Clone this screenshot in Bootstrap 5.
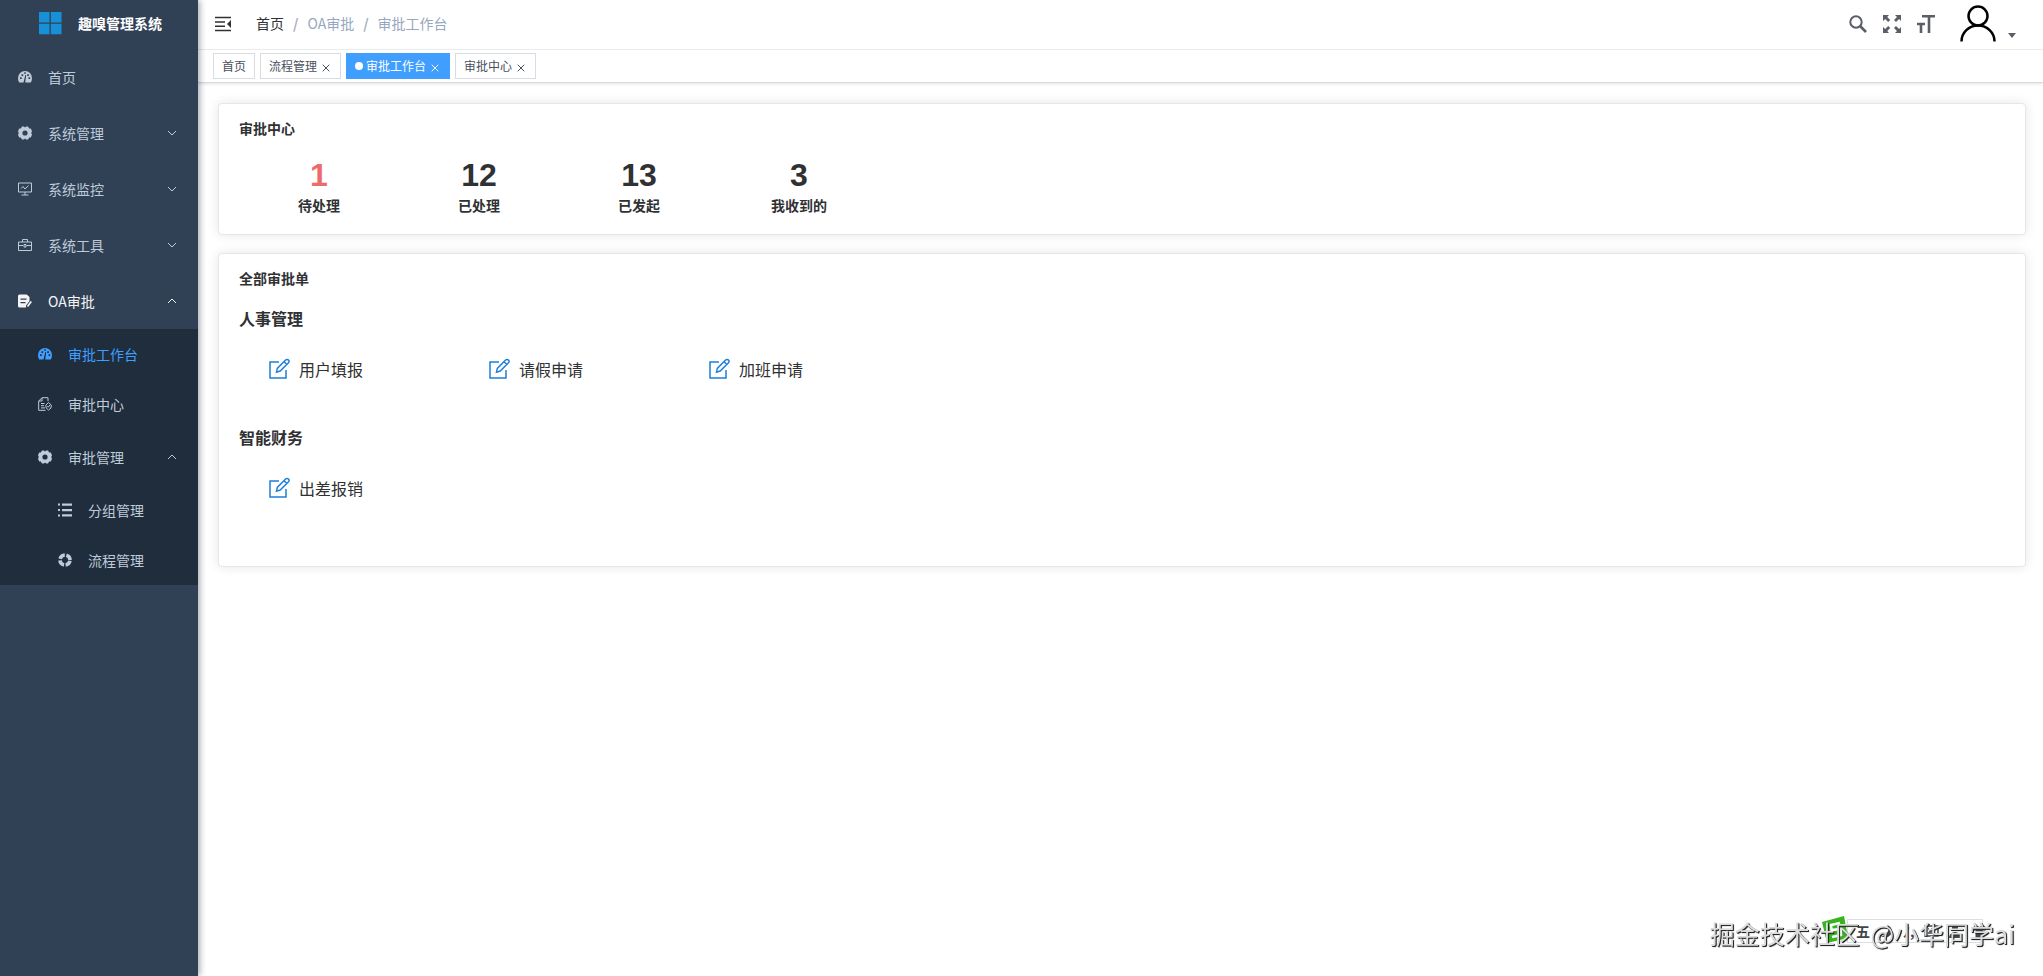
<!DOCTYPE html>
<html lang="zh-CN">
<head>
<meta charset="utf-8">
<meta name="viewport" content="width=device-width, initial-scale=1">
<title>趣嗅管理系统</title>
<link href="https://cdn.jsdelivr.net/npm/bootstrap@5.3.0/dist/css/bootstrap.min.css" rel="stylesheet">
<style>
  body { font-family: "Noto Sans CJK SC", sans-serif; font-size: 14px; line-height: 20px; color: #303133; background: #fff; }
  a { text-decoration: none; color: inherit; }
  button { color: inherit; }
  .icon { width: 1em; height: 1em; flex: none; fill: none; stroke: currentColor; stroke-width: 1.2; }
  .solid { fill: currentColor; stroke: none; }

  .sidebar { width: 198px; background: #304156; color: #bfcbd9; box-shadow: 2px 0 6px rgba(0,21,41,.35); z-index: 2; }
  .brand { height: 49px; color: #fff; font-weight: 700; gap: 16px; padding: 0 0 3px 38px; }
  .brand .icon { font-size: 24px; color: #1890d8; }
  .menu-link { display: flex; align-items: center; width: 100%; height: 56px; padding: 0 20px 1px 18px; gap: 16px; border: 0; background: none; text-align: left; }
  .menu-link .arrow { margin-left: auto; font-size: 12px; stroke-width: 1; }
  .menu-link > .icon:first-child { font-size: 14px; }
  .sub-menu { background: #1f2d3d; }
  .sub-menu .menu-link { padding-left: 38px; }
  .sub-menu .sub-menu .menu-link { padding-left: 58px; }
  .sub-menu .leaf { height: 50px; }
  .menu-link.active { color: #409eff; }
  .opened { color: #f4f4f5; }

  .topbar { height: 50px; padding: 0 27px 2px 17px; border-bottom: 1px solid #eef0f2; }
  .topbar button { border: 0; background: none; padding: 0; display: flex; }
  .crumbs { --bs-breadcrumb-divider: '/'; --bs-breadcrumb-divider-color: #a9b0bb; --bs-breadcrumb-item-padding-x: 9px; color: #97a8be; padding: 0 0 2px 1px; }
  .crumbs .breadcrumb-item + .breadcrumb-item::before { font-weight: 700; }
  .crumbs .home { color: #303133; }
  .tools { gap: 16px; color: #5a5e66; font-size: 18px; }
  .avatar { font-size: 38px; color: #000; }
  .caret { width: 8px; height: 5px; margin: 23px 0 0 11px; }

  .tags { height: 33px; padding: 3px 15px; gap: 5px; font-size: 12px; border-bottom: 1px solid #d8dce5; box-shadow: 0 1px 3px rgba(0,0,0,.12); color: #495060; }
  .tag { display: flex; align-items: center; height: 26px; padding: 0 8px; border: 1px solid #d8dce5; background: #fff; white-space: nowrap; }
  .tag button { border: 0; background: none; padding: 0; margin-left: 5px; width: 10px; display: flex; }
  .tag button .icon { font-size: 8px; margin-top: 3px; }
  .tag.active { background: #409eff; border-color: #409eff; color: #fff; }
  .tag.active::before { content: ""; width: 8px; height: 8px; border-radius: 50%; background: #fff; margin-right: 3px; }

  .board { padding: 20px 17px 20px 20px; gap: 18px; }
  .panel { background: #fff; border: 1px solid #e4e7ed; border-radius: 4px; padding: 14px 20px 16px; box-shadow: 0 0 12px rgba(0,0,0,.1); }
  .panel h2 { font-size: 14px; line-height: 20px; font-weight: 700; margin: 0; }
  .panel h3 { font-size: 16px; line-height: 24px; font-weight: 700; margin: 0; }
  .stats { padding: 18px 0 3px; }
  .stat { width: 160px; text-align: center; font-weight: 700; }
  .stat strong { display: block; font: 700 32px/39px "Liberation Sans", sans-serif; }
  .stat.todo strong { color: #ec6c6c; }
  .all-forms { padding-bottom: 40px; }
  .group { padding-top: 18px; height: 119px; }
  .forms { padding: 27px 0 0 29px; }
  .form-entry { display: flex; align-items: center; gap: 9px; width: 220px; font-size: 16px; line-height: 24px; }
  .form-entry .icon { font-size: 22px; color: #1e80d8; }

  .ime { right: 60px; bottom: 33px; width: 136px; height: 24px; border: 1px solid #d9e0e4; background: #fff; color: #3f474c; }
  .ime-logo { left: -28px; top: -5px; width: 30px; height: 30px; }
  .ime-bar { padding-left: 8px; gap: 9px; height: 22px; font-size: 14px; font-weight: 700; }
  .ime-bar .icon { font-size: 15px; }
  .credit { right: 28px; bottom: 25px; font-size: 25px; line-height: 36px; color: #dcdcdc; text-shadow: 1px 1px 1px #222, 1px 1px 0 #555; white-space: nowrap; }
  .credit span { margin-left: 5px; }
</style>
</head>
<body>
<svg class="d-none" xmlns="http://www.w3.org/2000/svg">
  <symbol id="gauge" viewBox="0 0 14 14"><path class="solid" fill-rule="evenodd" d="M7 1a7 7 0 0 0-7 7c0 1.700.4 3.200 1.200 4.500h4.300L7.300 5l.9.200-1 7.300h5.600C13.600 11.200 14 9.700 14 8a7 7 0 0 0-7-7zM2 7.200h1.700v1.700H2zM3.500 4.200h1.700v1.700H3.500zM6.200 2.300h1.600v1.500H6.200zM9.200 4.200h1.700v1.700H9.200zM10.500 7.200h1.700v1.700h-1.700z"/></symbol>
  <symbol id="gear" viewBox="0 0 14 14"><path class="solid" fill-rule="evenodd" d="M4 .5h2l.5.700h1L8 .5h2l1.200 1.900h1.600L14 5.200 13.200 7l.8 1.800-1.200 2.800h-1.600L10 13.500H8l-.5-.7h-1l-.5.7H4l-1.200-1.900H1.200L0 8.800.8 7 0 5.200l1.200-2.800h1.600zM7 4.400a2.600 2.600 0 1 0 0 5.200 2.600 2.600 0 0 0 0-5.200z"/></symbol>
  <symbol id="monitor" viewBox="0 0 14 14"><path d="M.5 1h13v9H.5zM7 10v3M3.500 13h7M3 6.500l2-2 2 2.500 3.500-3.500" stroke-width="1"/></symbol>
  <symbol id="toolbox" viewBox="0 0 14 14"><path d="M.5 4h13v8.500H.5zM4.500 4V1.500h5V4M.5 7.500H5M8.500 7.500h5M6 6.500h2v2.500H6z" stroke-width="1"/></symbol>
  <symbol id="formdoc" viewBox="0 0 14 14"><path class="solid" fill-rule="evenodd" d="M1.500.5h7.200L11.500 3v4L8 11.500v2H1.500A1.500 1.500 0 0 1 0 12V2A1.500 1.500 0 0 1 1.500.5zM2.500 4.500v1.200h6V4.500zM2.500 8v1.200h5V8z"/><path d="M13.300 7.500 9.500 12.600" stroke-width="1.700"/></symbol>
  <symbol id="filecheck" viewBox="0 0 14 14"><path d="M7.500 13.300H.7V4L4 .7h6v3.500M4 1v3H1M3 6.500h3.500M3 8.700h3M3 10.900h4M10.500 13a4.500 4.500 0 0 1-2.700-4.800L10.500 5.500l2.900 2.700A4.500 4.500 0 0 1 10.500 13zM9.300 9l1.100 1.200L12 7.900" stroke-width="1"/></symbol>
  <symbol id="list" viewBox="0 0 14 14"><path class="solid" d="M0 .5h2v2H0zM4 .5h10v2.300H4zM0 6h2v2H0zM4 5.900h10v2.300H4zM0 11.500h2v2H0zM4 11.200h10v2.300H4z"/></symbol>
  <symbol id="ring" viewBox="0 0 14 14"><circle cx="7" cy="7" r="5" stroke-width="3.600" stroke-dasharray="6.200 1.654" stroke-dashoffset="7.027"/></symbol>
  <symbol id="down" viewBox="0 0 12 12"><path d="M2 4l4 4 4-4"/></symbol>
  <symbol id="up" viewBox="0 0 12 12"><path d="M2 8l4-4 4 4"/></symbol>
  <symbol id="close" viewBox="0 0 8 8"><path d="M.7.7l6.600 6.600M7.300.7L.7 7.300" stroke-width="1"/></symbol>
  <symbol id="edit" viewBox="0 0 22 22"><path d="M11 4H2v16h16v-8M8.500 14.200l.8-3.800L17.600 2a2 2 0 0 1 2.900 0 2 2 0 0 1 0 2.700L12.200 13zM16 3.700l2.800 2.800" stroke-width="1.500"/></symbol>
</svg>

<div class="d-flex min-vh-100">
  <aside class="sidebar flex-shrink-0 position-relative">
    <a href="#" class="brand d-flex align-items-center">
      <svg class="icon" viewBox="0 0 24 24"><path class="solid" d="M1 1h10.500v10.500H1zM12.800 1H23.500v10.500H12.800zM1 12.800h10.500v10.500H1zM12.800 12.800h10.700v10.500H12.800z"/></svg>
      <span>趣嗅管理系统</span>
    </a>
    <nav aria-label="主菜单">
      <a class="menu-link" href="#"><svg class="icon"><use href="#gauge"/></svg>首页</a>
      <button class="menu-link"><svg class="icon"><use href="#gear"/></svg>系统管理<svg class="icon arrow"><use href="#down"/></svg></button>
      <button class="menu-link"><svg class="icon"><use href="#monitor"/></svg>系统监控<svg class="icon arrow"><use href="#down"/></svg></button>
      <button class="menu-link"><svg class="icon"><use href="#toolbox"/></svg>系统工具<svg class="icon arrow"><use href="#down"/></svg></button>
      <button class="menu-link opened" aria-expanded="true"><svg class="icon"><use href="#formdoc"/></svg>OA审批<svg class="icon arrow"><use href="#up"/></svg></button>
      <div class="sub-menu">
        <a class="menu-link leaf active" href="#"><svg class="icon"><use href="#gauge"/></svg>审批工作台</a>
        <a class="menu-link leaf" href="#"><svg class="icon"><use href="#filecheck"/></svg>审批中心</a>
        <button class="menu-link" aria-expanded="true"><svg class="icon"><use href="#gear"/></svg>审批管理<svg class="icon arrow"><use href="#up"/></svg></button>
        <div class="sub-menu">
          <a class="menu-link leaf" href="#"><svg class="icon"><use href="#list"/></svg>分组管理</a>
          <a class="menu-link leaf" href="#"><svg class="icon"><use href="#ring"/></svg>流程管理</a>
        </div>
      </div>
    </nav>
  </aside>

  <div class="flex-grow-1">
    <header class="topbar d-flex align-items-center">
      <button aria-label="收起菜单"><svg class="icon fs-6" viewBox="0 0 16 16"><path d="M0 1.500h16M0 6h10M0 10.200h10M0 14.500h16" stroke-width="1.600"/><path class="solid" d="M16 4v8l-4-4z"/></svg></button>
      <nav class="ms-4" aria-label="breadcrumb">
        <ol class="breadcrumb crumbs mb-0">
          <li class="breadcrumb-item"><a class="home" href="#">首页</a></li>
          <li class="breadcrumb-item">OA审批</li>
          <li class="breadcrumb-item" aria-current="page">审批工作台</li>
        </ol>
      </nav>
      <div class="tools d-flex align-items-center ms-auto">
        <button aria-label="搜索"><svg class="icon" viewBox="0 0 18 18"><circle cx="7" cy="7" r="5.700" stroke-width="2"/><path d="M11 11l6 6" stroke-width="2.600"/></svg></button>
        <button aria-label="全屏"><svg class="icon" viewBox="0 0 18 18"><path class="solid" d="M0 0h6L4.200 1.900l3 3-2 2-3-3L0 6zM18 0v6l-1.900-2.100-3.100 3-2-2 3-3L12 0zM0 18v-6l2.200 2.100 3-3 2 2-3 3L6 18zM18 18h-6l2-1.900-3-3 2-2 3.100 3L18 12z"/></svg></button>
        <button aria-label="字号"><svg class="icon" viewBox="0 0 18 18"><path d="M5 1.300h13M12 1v17M0 9h8M4 9v9" stroke-width="2.600"/></svg></button>
        <button class="ms-2" aria-label="用户菜单"><svg class="icon avatar" viewBox="0 0 38 38"><circle cx="19" cy="11" r="9.500" stroke-width="2.500"/><path d="M2.500 36.500a16.500 16 0 0 1 33 0" stroke-width="2.500"/></svg><svg class="caret align-self-center" viewBox="0 0 8 5"><path d="M0 0h8L4 5z" fill="#5a5e66"/></svg></button>
      </div>
    </header>
    <div class="tags d-flex">
      <a class="tag" href="#">首页</a>
      <div class="tag"><a href="#">流程管理</a><button aria-label="关闭"><svg class="icon"><use href="#close"/></svg></button></div>
      <div class="tag active"><a href="#">审批工作台</a><button aria-label="关闭"><svg class="icon"><use href="#close"/></svg></button></div>
      <div class="tag"><a href="#">审批中心</a><button aria-label="关闭"><svg class="icon"><use href="#close"/></svg></button></div>
    </div>
    <main class="board d-flex flex-column">
      <section class="panel">
        <h2>审批中心</h2>
        <div class="stats d-flex flex-wrap">
          <div class="stat todo"><strong>1</strong>待处理</div>
          <div class="stat"><strong>12</strong>已处理</div>
          <div class="stat"><strong>13</strong>已发起</div>
          <div class="stat"><strong>3</strong>我收到的</div>
        </div>
      </section>
      <section class="panel all-forms">
        <h2>全部审批单</h2>
        <div class="group">
          <h3>人事管理</h3>
          <div class="forms d-flex">
            <a class="form-entry" href="#"><svg class="icon"><use href="#edit"/></svg>用户填报</a>
            <a class="form-entry" href="#"><svg class="icon"><use href="#edit"/></svg>请假申请</a>
            <a class="form-entry" href="#"><svg class="icon"><use href="#edit"/></svg>加班申请</a>
          </div>
        </div>
        <div class="group">
          <h3>智能财务</h3>
          <div class="forms d-flex">
            <a class="form-entry" href="#"><svg class="icon"><use href="#edit"/></svg>出差报销</a>
          </div>
        </div>
      </section>
    </main>
  </div>
</div>

<div class="ime position-fixed">
  <svg class="ime-logo position-absolute" viewBox="0 0 30 30"><path d="M2 7l22-6 4 22-21 5z" fill="#35b41c"/><path d="M20 8l-9 2 .5 5 9-1 .5 6-9 2" fill="none" stroke="#fff" stroke-width="2.500"/></svg>
  <div class="ime-bar d-flex align-items-center">
    <span>五</span>
    <svg class="icon" viewBox="0 0 15 15"><path class="solid" d="M8 1a7 7 0 0 1-6 11 7 7 0 0 0 11-4 7 7 0 0 0-5-7z"/></svg>
    <span>ﾉ,</span>
    <svg class="icon" viewBox="0 0 15 15"><path d="M1 2h13v10H1zM4 5h1M7 5h1M10 5h1M4 9h7" stroke-width="1.500"/></svg>
    <svg class="icon" viewBox="0 0 15 15"><circle class="solid" cx="7" cy="4" r="3"/><path class="solid" d="M1 14a6 6 0 0 1 12 0z"/></svg>
    <svg class="icon" viewBox="0 0 15 15"><path class="solid" d="M4 1l3.500 2L11 1l4 3-2 3-1.500-1v8h-8V6L2 7 0 4z"/></svg>
  </div>
</div>
<div class="credit position-fixed">掘金技术社区 <span>@小华同学ai</span></div>
<script src="https://cdn.jsdelivr.net/npm/bootstrap@5.3.0/dist/js/bootstrap.bundle.min.js"></script>
</body>
</html>
